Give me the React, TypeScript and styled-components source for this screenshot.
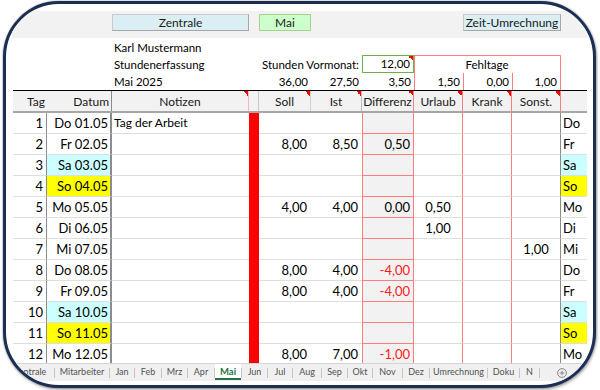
import * as React from 'react'
import styled, { createGlobalStyle } from 'styled-components'

// column widths of the sheet: Tag, Datum, Notizen, Balken, Soll, Ist, Differenz, Urlaub, Krank, Sonst., WT
const COLS = '34px 65px 137px 10px 52px 51px 52px 49px 49px 49px 26px'
const RED_LINE = '#ff7c80'
const GRID_LINE = '#dedede'
const DARK_LINE = '#8c8c8c'
const FLAG = 'linear-gradient(to bottom left, #ff0000 50%, transparent 50%) top right / 5px 5px no-repeat'

const GlobalStyle = createGlobalStyle`
  html, body { margin: 0; padding: 0; background: #fff; }
  body {
    font-family: Lato, "Liberation Sans", sans-serif;
    font-size: 11.5px;
    color: #000;
  }
`

const Stage = styled.div`
  width: 600px;
  height: 390px;
  box-sizing: border-box;
  padding: 1px 0 0 3px;
  background: #fff;
  overflow: hidden;
`

const Frame = styled.div`
  width: 593px;
  height: 387px;
  box-sizing: border-box;
  border: 3px solid #1b2e54;
  border-radius: 56px;
  overflow: hidden;
  background: #fff;
  box-shadow: 0 0 2px rgba(0, 0, 0, 0.45), 1px 2px 3px rgba(0, 0, 0, 0.3);
  display: flex;
  flex-direction: column;
`

const Band = styled.div`
  margin: 7px 0 0 6px;
  height: 27px;
  box-sizing: border-box;
  padding: 3px 0 0 1px;
  background: #f2f2f2;
  display: grid;
  grid-template-columns: ${COLS};
  align-items: start;
`

const SheetButton = styled.div<{ $col: string; $green?: boolean }>`
  grid-column: ${p => p.$col};
  height: 17px;
  box-sizing: border-box;
  display: flex;
  align-items: center;
  justify-content: center;
  font-size: 12px;
  color: #1a1a1a;
  background: ${p => (p.$green ? '#ccffcc' : '#daeef3')};
  border: 1px solid ${p => (p.$green ? '#a9d18e' : '#c9c9c9')};
  border-right-color: ${p => (p.$green ? '#a9d18e' : '#a6a6a6')};
  border-bottom-color: ${p => (p.$green ? '#a9d18e' : '#a6a6a6')};
`

const Info = styled.div`
  margin-left: 7px;
  display: grid;
  grid-template-columns: ${COLS};
  grid-template-rows: 18px 17px 17px;
`

const InfoCell = styled.div<{ $col: string; $row: number; $align?: 'left' | 'right' | 'center' }>`
  grid-column: ${p => p.$col};
  grid-row: ${p => p.$row};
  box-sizing: border-box;
  display: flex;
  align-items: flex-end;
  justify-content: ${p => (p.$align === 'right' ? 'flex-end' : p.$align === 'center' ? 'center' : 'flex-start')};
  padding: 0 3px 1px 2px;
  line-height: 14px;
  font-size: 11.5px;
  white-space: nowrap;
`

const VormonatBox = styled(InfoCell)`
  border: 1px solid #70ad47;
  margin-top: -1px;
  background: ${FLAG};
`

const FehltageBox = styled(InfoCell)`
  border: 1px solid ${RED_LINE};
  border-bottom: none;
  margin-top: -1px;
`

const TotalCell = styled(InfoCell)<{ $left?: boolean; $right?: boolean }>`
  border-left: ${p => (p.$left ? `1px solid ${RED_LINE}` : 'none')};
  border-right: ${p => (p.$right ? `1px solid ${RED_LINE}` : 'none')};
`

const HeaderRow = styled.div`
  margin-left: 7px;
  width: 574px;
  height: 23px;
  box-sizing: border-box;
  display: grid;
  grid-template-columns: ${COLS};
  border-top: 1px solid #000;
  border-bottom: 2px solid #a6a6a6;
  background: #f2f2f2;
`

const HeadCell = styled.div<{ $align?: 'right' | 'center'; $line?: string; $flag?: boolean }>`
  box-sizing: border-box;
  display: flex;
  align-items: center;
  justify-content: ${p => (p.$align === 'right' ? 'flex-end' : 'center')};
  padding: 1px 2px 0;
  font-size: 12px;
  color: #1a1a1a;
  white-space: nowrap;
  border-right: ${p => (p.$line ? `1px solid ${p.$line}` : 'none')};
  background: ${p => (p.$flag ? FLAG : 'none')};
`

const Body = styled.div`
  margin-left: 7px;
  height: 250px;
  overflow: hidden;
`

const Row = styled.div`
  display: grid;
  grid-template-columns: ${COLS};
  height: 21px;
`

const Cell = styled.div<{ $align?: 'left' | 'right' | 'center' }>`
  box-sizing: border-box;
  height: 21px;
  display: flex;
  align-items: flex-end;
  justify-content: ${p => (p.$align === 'right' ? 'flex-end' : p.$align === 'center' ? 'center' : 'flex-start')};
  padding: 0 3px 3px 2px;
  line-height: 14px;
  font-size: 13px;
  white-space: nowrap;
  border-bottom: 1px solid ${GRID_LINE};
`

type DayKind = 'sa' | 'so' | undefined

const dayBg = (k: DayKind) => (k === 'sa' ? '#ccffff' : k === 'so' ? '#ffff00' : '#fff')

const TagCell = styled(Cell)`
  border-right: 1px solid ${DARK_LINE};
`

const DateCell = styled(Cell)<{ $kind: DayKind }>`
  background: ${p => dayBg(p.$kind)};
  border-right: 2px solid ${DARK_LINE};
  padding-right: 2px;
`

const NoteCell = styled(Cell)`
  padding-left: 2px;
  font-size: 12px;
`

const BarCell = styled.div`
  background: #ff0000;
`

const NumCell = styled(Cell)<{ $line?: string }>`
  border-right: ${p => (p.$line ? `1px solid ${p.$line}` : 'none')};
  padding-right: 4px;
`

const DiffCell = styled(Cell)<{ $neg?: boolean }>`
  background: #f2f2f2;
  color: ${p => (p.$neg ? '#ff1a1a' : '#000')};
  border-left: 1px solid ${RED_LINE};
  border-right: 1px solid ${RED_LINE};
  border-bottom-color: ${RED_LINE};
  padding-right: 3px;
`

const AbsCell = styled(Cell)<{ $line: string }>`
  border-right: 1px solid ${p => p.$line};
  padding-left: 3px;
`

const DayCell = styled(Cell)<{ $kind: DayKind }>`
  background: ${p => dayBg(p.$kind)};
  padding-left: 2px;
`

const TabBar = styled.div`
  height: 18px;
  box-sizing: border-box;
  display: flex;
  align-items: stretch;
  background: #f0f0f0;
  border-top: 1px solid #d4d4d4;
  font-family: Lato, "Open Sans", sans-serif;
  font-size: 9px;
  color: #505050;
`

const Tab = styled.div<{ $w: number; $active?: boolean }>`
  width: ${p => p.$w}px;
  flex: none;
  box-sizing: border-box;
  display: flex;
  align-items: center;
  justify-content: center;
  white-space: nowrap;
  background: ${p => (p.$active ? '#fff' : 'transparent')};
  color: ${p => (p.$active ? '#217346' : 'inherit')};
  font-weight: ${p => (p.$active ? 700 : 400)};
  font-size: ${p => (p.$active ? '9.5px' : 'inherit')};
  border-bottom: 2px solid ${p => (p.$active ? '#217346' : 'transparent')};
  margin-bottom: 1px;
`

const TabSep = styled.div`
  width: 1px;
  height: 10px;
  align-self: center;
  background: #c6c6c6;
  flex: none;
`

const AddSheet = styled.svg`
  align-self: center;
  margin-left: 17px;
  flex: none;
`

interface DayRow {
  tag: number
  datum: string
  wt: string
  kind?: DayKind
  notiz?: string
  soll?: string
  ist?: string
  diff?: string
  urlaub?: string
  krank?: string
  sonst?: string
}

const days: DayRow[] = [
  { tag: 1, datum: 'Do 01.05', wt: 'Do', notiz: 'Tag der Arbeit' },
  { tag: 2, datum: 'Fr 02.05', wt: 'Fr', soll: '8,00', ist: '8,50', diff: '0,50' },
  { tag: 3, datum: 'Sa 03.05', wt: 'Sa', kind: 'sa' },
  { tag: 4, datum: 'So 04.05', wt: 'So', kind: 'so' },
  { tag: 5, datum: 'Mo 05.05', wt: 'Mo', soll: '4,00', ist: '4,00', diff: '0,00', urlaub: '0,50' },
  { tag: 6, datum: 'Di 06.05', wt: 'Di', urlaub: '1,00' },
  { tag: 7, datum: 'Mi 07.05', wt: 'Mi', sonst: '1,00' },
  { tag: 8, datum: 'Do 08.05', wt: 'Do', soll: '8,00', ist: '4,00', diff: '-4,00' },
  { tag: 9, datum: 'Fr 09.05', wt: 'Fr', soll: '8,00', ist: '4,00', diff: '-4,00' },
  { tag: 10, datum: 'Sa 10.05', wt: 'Sa', kind: 'sa' },
  { tag: 11, datum: 'So 11.05', wt: 'So', kind: 'so' },
  { tag: 12, datum: 'Mo 12.05', wt: 'Mo', soll: '8,00', ist: '7,00', diff: '-1,00' },
]

const tabs: { name: string; w: number }[] = [
  { name: 'Zentrale', w: 48 },
  { name: 'Mitarbeiter', w: 54 },
  { name: 'Jan', w: 24 },
  { name: 'Feb', w: 26 },
  { name: 'Mrz', w: 25 },
  { name: 'Apr', w: 26 },
  { name: 'Mai', w: 26 },
  { name: 'Jun', w: 25 },
  { name: 'Jul', w: 24 },
  { name: 'Aug', w: 28 },
  { name: 'Sep', w: 25 },
  { name: 'Okt', w: 24 },
  { name: 'Nov', w: 29 },
  { name: 'Dez', w: 26 },
  { name: 'Umrechnung', w: 57 },
  { name: 'Doku', w: 31 },
  { name: 'N', w: 19 },
]

export default function App() {
  return (
    <Stage>
      <GlobalStyle />
      <Frame>
        <Band>
          <SheetButton $col="3">Zentrale</SheetButton>
          <SheetButton $col="5" $green>Mai</SheetButton>
          <SheetButton $col="9 / 11">Zeit-Umrechnung</SheetButton>
        </Band>

        <Info>
          <InfoCell $col="3" $row={1}>Karl Mustermann</InfoCell>
          <InfoCell $col="3" $row={2}>Stundenerfassung</InfoCell>
          <InfoCell $col="5 / 7" $row={2} $align="right">Stunden Vormonat:</InfoCell>
          <VormonatBox $col="7" $row={2} $align="right">12,00</VormonatBox>
          <FehltageBox $col="8 / 11" $row={2} $align="center">Fehltage</FehltageBox>
          <InfoCell $col="3" $row={3}>Mai 2025</InfoCell>
          <TotalCell $col="5" $row={3} $align="right">36,00</TotalCell>
          <TotalCell $col="6" $row={3} $align="right">27,50</TotalCell>
          <TotalCell $col="7" $row={3} $align="right">3,50</TotalCell>
          <TotalCell $col="8" $row={3} $align="right" $left>1,50</TotalCell>
          <TotalCell $col="9" $row={3} $align="right" $left>0,00</TotalCell>
          <TotalCell $col="10" $row={3} $align="right" $left $right>1,00</TotalCell>
        </Info>

        <HeaderRow>
          <HeadCell $align="right">Tag</HeadCell>
          <HeadCell $align="right" $line={DARK_LINE}>Datum</HeadCell>
          <HeadCell $flag $line="#f4b6b8">Notizen</HeadCell>
          <HeadCell $line="#c8c8c8" />
          <HeadCell $flag $line="#d0d0d0">Soll</HeadCell>
          <HeadCell $flag $line="#bdbdbd">Ist</HeadCell>
          <HeadCell $flag $line={RED_LINE}>Differenz</HeadCell>
          <HeadCell $flag $line={RED_LINE}>Urlaub</HeadCell>
          <HeadCell $flag $line={RED_LINE}>Krank</HeadCell>
          <HeadCell $flag $line={RED_LINE}>Sonst.</HeadCell>
          <HeadCell />
        </HeaderRow>

        <Body>
          {days.map(d => (
            <Row key={d.tag}>
              <TagCell $align="right">{d.tag}</TagCell>
              <DateCell $align="right" $kind={d.kind}>{d.datum}</DateCell>
              <NoteCell>{d.notiz}</NoteCell>
              <BarCell />
              <NumCell $align="right">{d.soll}</NumCell>
              <NumCell $align="right">{d.ist}</NumCell>
              <DiffCell $align="right" $neg={!!d.diff && d.diff.startsWith('-')}>{d.diff}</DiffCell>
              <AbsCell $align="center" $line={RED_LINE}>{d.urlaub}</AbsCell>
              <AbsCell $align="center" $line={RED_LINE}>{d.krank}</AbsCell>
              <AbsCell $align="center" $line={DARK_LINE}>{d.sonst}</AbsCell>
              <DayCell $kind={d.kind}>{d.wt}</DayCell>
            </Row>
          ))}
        </Body>

        <TabBar>
          {tabs.map((t, i) => (
            <React.Fragment key={t.name}>
              <Tab $w={t.w} $active={t.name === 'Mai'}>{t.name}</Tab>
              {i < tabs.length - 1 && <TabSep />}
            </React.Fragment>
          ))}
          <TabSep />
          <AddSheet width="10" height="10" viewBox="0 0 10 10">
            <circle cx="5" cy="5" r="4.4" fill="none" stroke="#7a7a7a" strokeWidth="0.9" />
            <path d="M5 2.7v4.6M2.7 5h4.6" stroke="#7a7a7a" strokeWidth="0.9" />
          </AddSheet>
        </TabBar>
      </Frame>
    </Stage>
  )
}
